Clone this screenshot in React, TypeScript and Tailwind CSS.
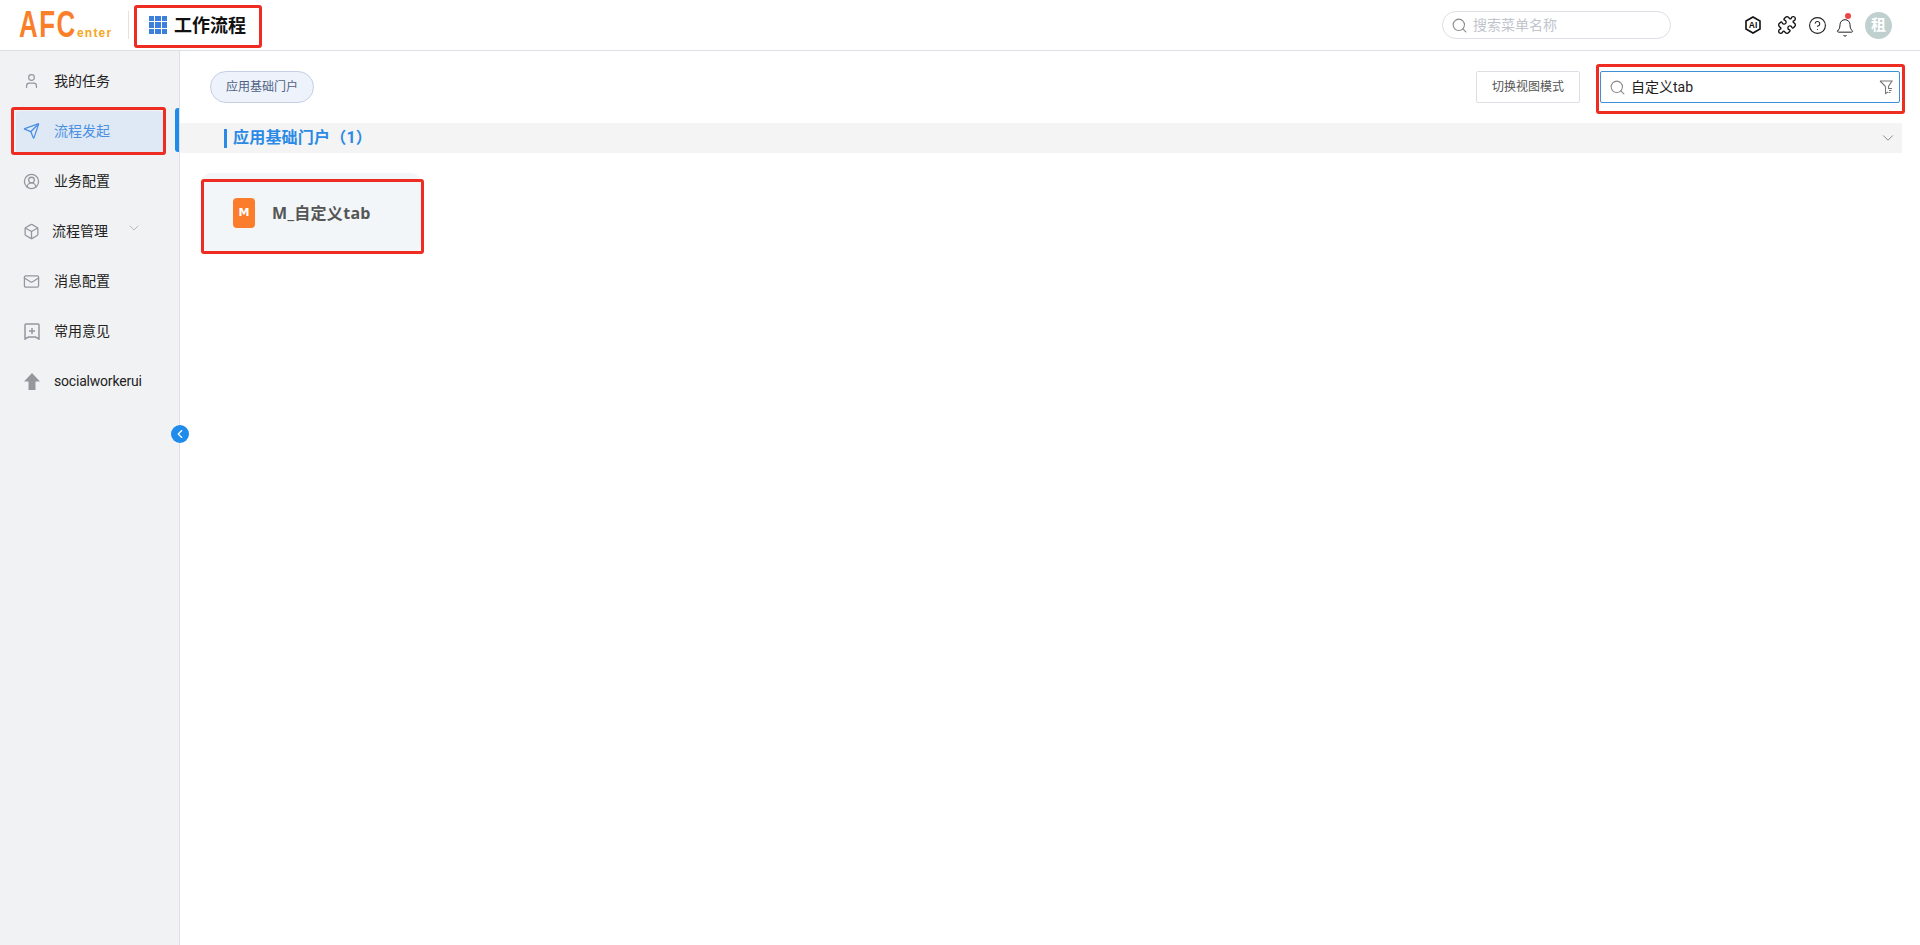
import React from 'react';
import { Search, User, Send, CircleUserRound, Box, ChevronDown, ChevronLeft, Mail, CircleHelp, Bell, Puzzle } from 'lucide-react';

const fontStack = '[font-family:"Roboto","Noto_Sans_CJK_SC",sans-serif]';

function AiHex() {
  return (
    <svg width="18" height="18" viewBox="0 0 18 18" fill="none" stroke="#111" strokeWidth="1.6">
      <path d="M9 1 16 5v8L9 17 2 13V5z" />
      <text x="9" y="12" textAnchor="middle" fontSize="8.5" fontWeight="700" fill="#111" stroke="none" fontFamily="Liberation Sans">AI</text>
    </svg>
  );
}

function FilterIcon() {
  return (
    <svg width="14" height="15" viewBox="0 0 14 15" fill="none" stroke="#777" strokeWidth="1.1">
      <path d="M1 1h12L9.5 6.5V9M6.5 6.5 1 1M6.5 6.5v7L9 12" />
      <path d="M10 8.5h3M10 10.5h2.5M9.5 12.5h2" />
    </svg>
  );
}

function BookmarkPlusIcon() {
  return (
    <svg width="16" height="17" viewBox="0 0 16 17" fill="none" stroke="#94979e" strokeWidth="1.5">
      <path d="M1 2a1 1 0 0 1 1-1h12a1 1 0 0 1 1 1v14l-3.5-2h-7L1 16z" />
      <path d="M8 5v6M5 8h6" />
    </svg>
  );
}

function UpArrowIcon() {
  return (
    <svg width="16" height="17" viewBox="0 0 16 17" fill="#94979e">
      <path d="M8 0 16 8.5h-4.5V17h-7V8.5H0z" />
    </svg>
  );
}

function Logo() {
  return (
    <div className="flex items-end h-[32px] w-[92px] font-['Liberation_Sans'] leading-none">
      <span className="block w-[58px] text-[36px] font-bold tracking-[2px] text-[#f97f2a] origin-left scale-x-[0.72] whitespace-nowrap -mb-[2px]">AFC</span>
      <span className="mb-[2px] text-[12px] font-bold tracking-[1.2px] text-[#f5a623]">enter</span>
    </div>
  );
}

const menu = [
  { label: '我的任务', icon: <User className="w-[24px] h-[24px]" strokeWidth={1.7} /> },
  { label: '流程发起', icon: <Send className="w-[18px] h-[18px]" strokeWidth={1.8} />, active: true },
  { label: '业务配置', icon: <CircleUserRound className="w-[19px] h-[19px]" strokeWidth={1.8} /> },
  { label: '流程管理', icon: <Box className="w-[17px] h-[17px]" strokeWidth={1.8} />, sub: true },
  { label: '消息配置', icon: <Mail className="w-[19px] h-[19px]" strokeWidth={1.8} /> },
  { label: '常用意见', icon: <BookmarkPlusIcon /> },
  { label: 'socialworkerui', icon: <UpArrowIcon />, latin: true },
];

function Sidebar() {
  return (
    <aside className="relative w-[180px] shrink-0 bg-[#f1f2f4] border-r border-[#dcdfe4] pt-[5px]">
      {menu.map((item) => (
        <div key={item.label} className="relative h-[50px] flex items-center">
          {item.active && (
            <>
              <div className="absolute left-[16px] top-[5px] w-[147px] h-[44px] bg-[#dfe9f5] rounded-[4px]" />
              <div className="absolute left-[175px] top-[2px] w-[4px] h-[44px] bg-[#1f8ceb] rounded-l-[3px]" />
            </>
          )}
          <div className={`relative flex items-center pl-[23px] text-[14px] ${item.active ? 'text-[#4a90e2]' : 'text-[#222]'}`}>
            <span className={`w-[17px] shrink-0 flex justify-center ${item.active ? 'text-[#4a90e2]' : 'text-[#94979e]'}`}>{item.icon}</span>
            <span className={`${item.sub ? 'ml-[12px]' : 'ml-[14px]'} ${item.latin ? 'tracking-[-0.2px]' : ''}`}>{item.label}</span>
            {item.sub && <ChevronDown className="ml-[18px] -mt-[6px] w-[16px] h-[16px] text-[#aaa]" strokeWidth={1.2} />}
          </div>
        </div>
      ))}
      <div className="absolute -right-[10px] top-[374px] w-[18px] h-[18px] rounded-full bg-[#1f8ceb] flex items-center justify-center text-white">
        <ChevronLeft className="w-[14px] h-[14px]" />
      </div>
    </aside>
  );
}

export default function App() {
  return (
    <div className={`relative w-[1920px] h-[945px] flex flex-col bg-white overflow-hidden ${fontStack}`}>
      <header className="h-[51px] shrink-0 flex items-center border-b border-[#dcdfe4] bg-white">
        <div className="ml-[19px]"><Logo /></div>
        <div className="ml-[17px] w-px h-[28px] bg-[#e2e2e2]" />
        <div className="ml-[20px] grid grid-cols-3 gap-[1px] w-[18px] h-[18px]">
          {Array.from({ length: 9 }).map((_, i) => (
            <span key={i} className="bg-[#3d7fdc]" />
          ))}
        </div>
        <span className="ml-[7px] text-[18px] font-bold text-[#111]">工作流程</span>
        <div className="ml-auto w-[229px] h-[28px] mr-[73px] rounded-full border border-[#dcdfe4] flex items-center pl-[8px] text-[14px] text-[#c0c4cc]">
          <Search className="w-[17px] h-[17px] text-[#888]" strokeWidth={1.5} />
          <span className="ml-[5px]">搜索菜单名称</span>
        </div>
        <div className="flex items-center mr-[28px]">
          <AiHex />
          <Puzzle className="ml-[15px] w-[20px] h-[20px] text-[#111]" strokeWidth={1.6} />
          <CircleHelp className="ml-[11px] w-[19px] h-[19px] text-[#222]" strokeWidth={1.4} />
          <div className="relative ml-[8px] mt-[5px]">
            <Bell className="w-[20px] h-[20px] text-[#222]" strokeWidth={1.2} />
            <span className="absolute -top-[5px] left-[10px] w-[6px] h-[6px] rounded-full bg-[#ef4444]" />
          </div>
          <div className="ml-[10px] w-[27px] h-[27px] rounded-full bg-[#bfd0ce] text-white text-[15px] font-bold flex items-center justify-center">租</div>
        </div>
      </header>
      <div className="flex-1 flex">
        <Sidebar />
        <main className="flex-1 pl-[29px] pr-[18px]">
          <div className="h-[72px] flex items-start pt-[20px]">
            <div className="h-[32px] ml-[1px] px-[15px] rounded-full bg-[#eef2fa] border border-[#c5cfe6] text-[12px] text-[#4d6183] flex items-center">应用基础门户</div>
            <div className="ml-auto h-[32px] w-[104px] border border-[#dcdfe4] rounded-[2px] text-[12px] text-[#555] flex items-center justify-center">切换视图模式</div>
            <div className="ml-[20px] mr-[2px] h-[32px] w-[300px] border border-[#3d8fd9] rounded-[2px] flex items-center pl-[8px] pr-[6px] text-[14px] text-[#222]">
              <Search className="w-[17px] h-[17px] text-[#888]" strokeWidth={1.5} />
              <span className="ml-[5px]">自定义tab</span>
              <span className="ml-auto"><FilterIcon /></span>
            </div>
          </div>
          <div className="-ml-[29px] h-[30px] bg-[#f4f4f4] flex items-center pl-[44px] pr-[5px]">
            <span className="w-[3px] h-[19px] bg-[#2a8ae6]" />
            <span className="ml-[6px] text-[16px] font-bold text-[#2a8ae6] tracking-[0.2px]">应用基础门户（1）</span>
            <ChevronDown className="ml-auto w-[18px] h-[18px] text-[#777]" strokeWidth={1.1} />
          </div>
          <div className="mt-[20px] -ml-[8px] w-[220px] h-[80px] rounded-[10px] bg-[#f2f6f8] flex items-center pl-[32px]">
            <div className="w-[22px] h-[30px] rounded-[4px] bg-[#fb7d2c] text-white text-[11px] font-bold flex items-center justify-center font-['DejaVu_Sans']">M</div>
            <span className="ml-[17px] text-[16px] font-bold text-[#555] tracking-[0.3px] [font-family:'Open_Sans','Noto_Sans_CJK_SC',sans-serif]">M_自定义tab</span>
          </div>
        </main>
      </div>
      {/* red annotation boxes drawn on top of the screenshot */}
      <div className="absolute left-[134px] top-[5px] w-[128px] h-[43px] border-[3px] border-[#ee2c22] rounded-[3px]" />
      <div className="absolute left-[11px] top-[107px] w-[155px] h-[48px] border-[3px] border-[#ee2c22] rounded-[3px]" />
      <div className="absolute left-[1596px] top-[64px] w-[309px] h-[50px] border-[3px] border-[#ee2c22] rounded-[3px]" />
      <div className="absolute left-[201px] top-[179px] w-[223px] h-[75px] border-[3px] border-[#ee2c22] rounded-[3px]" />
    </div>
  );
}
